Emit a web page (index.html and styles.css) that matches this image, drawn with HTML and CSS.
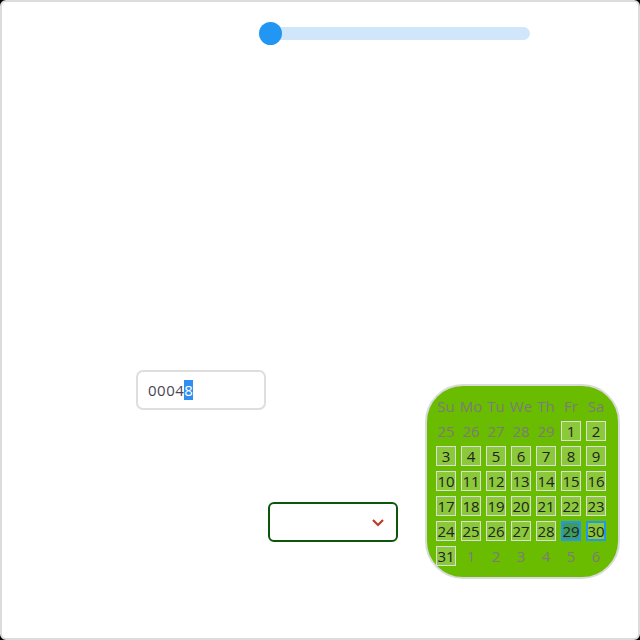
FILE: index.html
```html
<!DOCTYPE html>
<html>
<head>
<meta charset="utf-8">
<link rel="stylesheet" href="styles.css">
</head>
<body>
<div class="frame">
  <div class="slider">
    <div class="track"></div>
    <div class="thumb"></div>
  </div>
  <div class="bottom">
    <div class="left-col">
      <div class="text-input"><span>0004</span><span class="sel">8</span></div>
      <div class="select">
        <svg class="chev" width="14" height="9" viewBox="0 0 14 9"><path d="M2 2 L7 7 L12 2" fill="none" stroke="#c0392b" stroke-width="2.2"/></svg>
      </div>
    </div>
    <div class="calendar">
      <div class="grid">
        <div class="hd">Su</div><div class="hd">Mo</div><div class="hd">Tu</div><div class="hd">We</div><div class="hd">Th</div><div class="hd">Fr</div><div class="hd">Sa</div>
        <div class="d out">25</div><div class="d out">26</div><div class="d out">27</div><div class="d out">28</div><div class="d out">29</div><div class="d">1</div><div class="d">2</div>
        <div class="d">3</div><div class="d">4</div><div class="d">5</div><div class="d">6</div><div class="d">7</div><div class="d">8</div><div class="d">9</div>
        <div class="d">10</div><div class="d">11</div><div class="d">12</div><div class="d">13</div><div class="d">14</div><div class="d">15</div><div class="d">16</div>
        <div class="d">17</div><div class="d">18</div><div class="d">19</div><div class="d">20</div><div class="d">21</div><div class="d">22</div><div class="d">23</div>
        <div class="d">24</div><div class="d">25</div><div class="d">26</div><div class="d">27</div><div class="d">28</div><div class="d sel-day">29</div><div class="d focus">30</div>
        <div class="d">31</div><div class="d out">1</div><div class="d out">2</div><div class="d out">3</div><div class="d out">4</div><div class="d out">5</div><div class="d out">6</div>
      </div>
    </div>
  </div>
</div>
</body>
</html>
```
FILE: styles.css
```css
html { background: #000; }
body { margin: 0; font-family: "Open Sans", "Noto Sans", sans-serif; }
.frame {
  width: 640px; height: 640px; box-sizing: border-box;
  border: 2px solid #dcdcdc; border-radius: 6px; background: #fff;
  overflow: hidden;
}
.slider { position: relative; margin: 20px 0 0 257px; width: 271px; height: 24px; }
.track { position: absolute; left: 2px; right: 0; top: 5px; height: 13px; border-radius: 7px; background: #d0e7fb; }
.thumb { position: absolute; left: 0; top: 0; width: 23px; height: 23px; border-radius: 50%; background: #2196f3; }
.bottom { display: flex; align-items: flex-start; margin-top: 324px; padding-left: 134px; }
.left-col { width: 261px; display: flex; flex-direction: column; }
.text-input {
  width: 130px; height: 40px; box-sizing: border-box;
  border: 2px solid #dedede; border-radius: 7px;
  padding-left: 10px; display: flex; align-items: center;
  font-size: 15px; color: #4a4554; letter-spacing: 0.5px;
}
.text-input .sel { background: #2e8ff0; color: #fff; }
.select {
  margin: 92px 0 0 132px;
  width: 130px; height: 40px; box-sizing: border-box;
  border: 2px solid #0b560b; border-radius: 6px;
  display: flex; align-items: center; justify-content: flex-end; padding-right: 11px;
}
.calendar {
  margin: 14px 0 0 28px;
  width: 195px; height: 195px; box-sizing: border-box;
  border: 2px solid #dadada; border-radius: 38px;
  background: #6abc00;
  padding: 10px 0 0 9px;
}
.grid { display: grid; grid-template-columns: repeat(7, 20px); grid-auto-rows: 20px; gap: 5px; }
.hd, .d { display: flex; align-items: center; justify-content: center; font-size: 15px; }
.hd { color: #7b7b7b; }
.d { box-sizing: border-box; border: 1px solid #dcdcdc; background: #8bc83a; color: #222; }
.d.out { border: none; background: none; color: #7b7b7b; }
.d.sel-day { background: #3d9b5f; border: 2px solid #2196f3; }
.d.focus { border: 2px solid #2196f3; }
```
